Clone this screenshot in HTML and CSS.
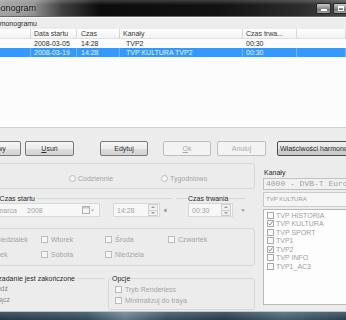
FILE: index.html
```html
<!DOCTYPE html>
<html lang="pl">
<head>
    <meta charset="UTF-8">
    <meta name="viewport" content="width=device-width, initial-scale=1.0">
    <title>Harmonogram</title>
    <link rel="stylesheet" href="styles.css">
</head>
<body>
<div class="window">
    <div class="titlebar">
        <div class="title clip"><span>Harmonogram</span></div>
        <div class="caption-btns">
            <span class="cap-btn"><span class="cap-min"></span></span>
            <span class="cap-btn"><span class="cap-max"></span></span>
        </div>
    </div>

    <div class="client">
        <div class="list-caption clip"><span>Lista harmonogramu</span></div>
        <div class="listview">
            <div class="lv-row lv-head">
                <span class="c0"></span><span class="c1">Data startu</span><span class="c2">Czas</span><span class="c3">Kanały</span><span class="c4">Czas trwa...</span><span class="c5"></span>
            </div>
            <div class="lv-row">
                <span class="c0"></span><span class="c1">2008-03-05</span><span class="c2">14:28</span><span class="c3">TVP2</span><span class="c4">00:30</span><span class="c5"></span>
            </div>
            <div class="lv-row selected">
                <span class="c0"></span><span class="c1">2008-03-19</span><span class="c2">14:28</span><span class="c3">TVP KULTURA TVP2</span><span class="c4">00:30</span><span class="c5"></span>
            </div>
        </div>

        <div class="buttons">
            <button class="btn w-nowy">Nowy</button>
            <button class="btn w-usun"><u>U</u>suń</button>
            <button class="btn w-edytuj">Edytuj</button>
            <button class="btn w-ok" disabled><u>O</u>k</button>
            <button class="btn w-anuluj" disabled>Anuluj</button>
            <button class="btn btn-default w-wlasc">Właściwości harmonogramu</button>
        </div>

        <div class="lower">
            <div class="left">
                <div class="frame mode">
                    <label class="radio-item"><span class="radio"></span>Codziennie</label>
                    <label class="radio-item"><span class="radio"></span>Tygodniowo</label>
                </div>

                <div class="times">
                    <div class="gb-line start">
                        <div class="gb-label clip start-label"><span>Czas startu</span></div>
                        <div class="picker-row">
                            <div class="datepicker">
                                <span class="clip date-day"><span>środa, 19 marca</span></span>
                                <span class="date-year">2008</span>
                                <svg class="cal-icon" width="13" height="8" viewBox="0 0 13 8">
                                    <rect x="0.5" y="0.5" width="7" height="7" fill="#f4f4f4" stroke="#b4b4b4"/>
                                    <rect x="1" y="1" width="6" height="1.5" fill="#c8c8c8"/>
                                    <path d="M9 3.5 L12 3.5 L10.5 5.5 Z" fill="#a8a8a8"/>
                                </svg>
                            </div>
                            <div class="spin spin-time">
                                <span>14:28</span>
                                <span class="spin-btns">
                                    <span class="spin-up"></span>
                                    <span class="spin-down"></span>
                                </span>
                            </div>
                            <svg class="tiny-arrow" width="4" height="5" viewBox="0 0 4 5">
                                <path d="M3.5 0.5 L0.5 2.5 L3.5 4.5 Z" fill="#8c8c8c"/>
                            </svg>
                        </div>
                    </div>

                    <div class="gb-line duration">
                        <div class="gb-label dur-label">Czas trwania</div>
                        <div class="picker-row">
                            <div class="spin spin-dur">
                                <span>00:30</span>
                                <span class="spin-btns">
                                    <span class="spin-up"></span>
                                    <span class="spin-down"></span>
                                </span>
                            </div>
                            <svg class="tiny-dash" width="4" height="3" viewBox="0 0 4 3">
                                <path d="M0 0.5 L4 0.5 L2 2.5 Z" fill="#8c8c8c"/>
                            </svg>
                        </div>
                    </div>
                </div>

                <div class="frame days">
                    <div class="day-grid">
                        <label class="check-item"><span class="check"></span>Poniedziałek</label>
                        <label class="check-item"><span class="check"></span>Wtorek</label>
                        <label class="check-item"><span class="check"></span>Środa</label>
                        <label class="check-item"><span class="check"></span>Czwartek</label>
                        <label class="check-item"><span class="check"></span>Piątek</label>
                        <label class="check-item"><span class="check"></span>Sobota</label>
                        <label class="check-item"><span class="check"></span>Niedziela</label>
                    </div>
                </div>

                <div class="ends">
                    <div class="gb-line when">
                        <div class="gb-label clip when-label"><span>Gdy zadanie jest zakończone</span></div>
                        <div class="when-opt clip w1"><span>Nic nie rób / Uśpij / Budź</span></div>
                        <div class="when-opt clip w2"><span>Wyłącz</span></div>
                    </div>
                    <div class="options">
                        <div class="gb-label opt-label">Opcje</div>
                        <label class="check-item opt"><span class="check"></span>Tryb Renderless</label>
                        <label class="check-item opt"><span class="check"></span>Minimalizuj do traya</label>
                    </div>
                </div>
            </div>

            <div class="right">
                <div class="channels-label">Kanały</div>
                <div class="combo">4000 - DVB-T Europe</div>
                <div class="chan-edit">TVP KULTURA</div>
                <div class="chan-list">
                    <div class="chan"><span class="check"></span>TVP HISTORIA</div>
                    <div class="chan"><span class="check"><svg width="5" height="5" viewBox="0 0 5 5"><path d="M0.5 2.5 L2 4 L4.5 0.5" fill="none" stroke="#8a8a8a" stroke-width="1"/></svg></span>TVP KULTURA</div>
                    <div class="chan"><span class="check"></span>TVP SPORT</div>
                    <div class="chan"><span class="check"></span>TVP1</div>
                    <div class="chan"><span class="check"><svg width="5" height="5" viewBox="0 0 5 5"><path d="M0.5 2.5 L2 4 L4.5 0.5" fill="none" stroke="#8a8a8a" stroke-width="1"/></svg></span>TVP2</div>
                    <div class="chan"><span class="check"></span>TVP INFO</div>
                    <div class="chan"><span class="check"></span>TVP1_AC3</div>
                </div>
            </div>
        </div>
    </div>

    <div class="frame-bottom"></div>
</div>
</body>
</html>
```

FILE: styles.css
```css
* {
    box-sizing: border-box;
}
body {
    margin: 0;
    width: 346px;
    height: 320px;
    overflow: hidden;
    background-color: #ececec;
    font-family: "Liberation Sans", Arial, sans-serif;
    font-size: 7px;
    color: #2b2b2b;
}
.window {
    display: flex;
    flex-direction: column;
    height: 320px;
}
/* text that runs off the left edge: keep its end, cut its start */
.clip {
    display: flex;
    justify-content: flex-end;
    overflow: hidden;
    white-space: nowrap;
}

/* title bar */
.titlebar {
    height: 17px;
    flex: none;
    display: flex;
    justify-content: space-between;
    border-bottom: 1px solid #6a6a6a;
    background:
        linear-gradient(to bottom, rgba(255,255,255,0.2), rgba(255,255,255,0) 5px),
        linear-gradient(to right, #a2a2a2 0, #8e8e8e 34px, #404040 62px, #0c0c0c 100px, #121212 220px, #2c2c2c 300px, #484848 346px);
}
.title {
    width: 36px;
    font-size: 9px;
    line-height: 16px;
    color: #141414;
    text-shadow: 0 0 4px #dcdcdc;
}
.caption-btns {
    display: flex;
    gap: 2px;
    margin-top: 3px;
    margin-right: -2px;
}
.cap-btn {
    width: 15px;
    height: 11px;
    border: 1px solid #262626;
    border-radius: 2px;
    background: linear-gradient(#cacaca, #8d8d8d 50%, #6a6a6a 51%, #a2a2a2);
    display: flex;
    align-items: center;
    justify-content: center;
}
.cap-min {
    width: 6px;
    height: 2px;
    margin-top: 3px;
    background: #fff;
}
.cap-max {
    width: 6px;
    height: 5px;
    border: 1px solid #fff;
    border-top-width: 2px;
}

/* client */
.client {
    flex: 1;
    display: flex;
    flex-direction: column;
    border-top: 1px solid #fbfbfb;
}
.list-caption {
    width: 37px;
    height: 10px;
    line-height: 10px;
    margin-top: 1px;
    flex: none;
}

/* list view */
.listview {
    height: 99px;
    flex: none;
    background-color: #fcfcfc;
    border-bottom: 1px solid #d2d2d2;
}
.lv-row {
    display: flex;
    height: 9px;
    line-height: 9px;
    white-space: nowrap;
}
.lv-row span {
    flex: none;
    padding-left: 3px;
    overflow: hidden;
}
.c0 { width: 31px; }
.c1 { width: 46px; }
.c2 { width: 43px; }
.c3 { width: 123px; }
.c4 { width: 54px; }
.lv-row .c5 { flex: 1; }
.lv-row .c2 { padding-left: 4px; }
.lv-row .c3 { padding-left: 6px; }
.lv-head {
    height: 10px;
    line-height: 10px;
    background: linear-gradient(#ffffff, #f3f3f3);
    border-bottom: 1px solid #e0e0e0;
    color: #3a3a3a;
}
.lv-head span {
    border-right: 1px solid #d6d6d6;
}
.lv-head .c3 {
    padding-left: 3px;
}
.selected {
    background-color: #3399ff;
    color: #eaf3ff;
}
.selected span {
    border-right: 1px solid rgba(255,255,255,0.3);
}

/* buttons */
.buttons {
    display: flex;
    height: 15px;
    margin-top: 13px;
    flex: none;
}
.btn {
    font: inherit;
    height: 15px;
    padding: 0;
    flex: none;
    white-space: nowrap;
    border: 1px solid #7a7a7a;
    border-radius: 2px;
    color: #2b2b2b;
    background: linear-gradient(#f5f5f5, #ececec 50%, #dedede 51%, #d3d3d3);
}
.btn:disabled {
    border-color: #bcc0c3;
    background: #f3f3f3;
    color: #a9a9a9;
}
.btn-default {
    border-color: #4d4d4d;
    text-align: left;
    padding-left: 2px;
    overflow: hidden;
    background: linear-gradient(#f0f0f0, #e4e4e4 50%, #d2d2d2 51%, #c9c9c9);
}
.w-nowy { width: 48px; margin-left: -27px; }
.w-usun { width: 49px; margin-left: 4px; }
.w-edytuj { width: 48px; margin-left: 26px; }
.w-ok { width: 48px; margin-left: 15px; }
.w-anuluj { width: 49px; margin-left: 6px; }
.w-wlasc { width: 80px; margin-left: 11px; }

/* lower part */
.lower {
    display: flex;
    height: 155px;
    flex: none;
}
.left {
    width: 255px;
    flex: none;
    display: flex;
    flex-direction: column;
}
.right {
    width: 90px;
    margin-left: 8px;
    flex: none;
    display: flex;
    flex-direction: column;
}
.frame {
    border: 1px solid #d3d8dc;
    border-radius: 3px;
    margin-left: -10px;
    width: 265px;
    flex: none;
}

.mode {
    height: 26px;
    margin-top: 7px;
    padding: 4px 0 0 78px;
    display: flex;
    align-items: center;
}
.radio-item {
    display: flex;
    align-items: center;
    width: 92px;
    flex: none;
    color: #a5a5a5;
}
.radio {
    width: 7px;
    height: 7px;
    margin-right: 2px;
    flex: none;
    border: 1px solid #bdbdbd;
    border-radius: 50%;
    background: #f6f6f6;
}

/* group boxes drawn as a top line with a label over it */
.gb-line {
    border-top: 1px solid #d3d8dc;
}
.gb-label {
    height: 9px;
    line-height: 9px;
    margin-top: -5px;
    background-color: #ececec;
    white-space: nowrap;
}

.times {
    display: flex;
    height: 31px;
    flex: none;
}
.start {
    width: 172px;
    margin-top: 9px;
}
.start-label {
    width: 37px;
    padding-right: 2px;
}
.picker-row {
    display: flex;
    align-items: center;
    height: 14px;
}
.datepicker {
    width: 100px;
    height: 14px;
    display: flex;
    align-items: center;
    border: 1px solid #d8d8d8;
    border-left: none;
    background: #f7f7f7;
    color: #a5a5a5;
}
.date-day {
    width: 17px;
}
.date-year {
    margin-left: 10px;
}
.cal-icon {
    margin-left: auto;
    margin-right: 4px;
}
.spin {
    display: flex;
    align-items: center;
    height: 14px;
    padding-left: 3px;
    border: 1px solid #d8d8d8;
    background: #f7f7f7;
    color: #a5a5a5;
}
.spin-time {
    width: 47px;
    margin-left: 13px;
}
.spin-dur {
    width: 45px;
    margin-left: 12px;
}
.spin-btns {
    margin-left: auto;
    margin-right: 1px;
    width: 10px;
    height: 12px;
    display: flex;
    flex-direction: column;
    border: 1px solid #d0d0d0;
    background: #efefef;
}
.spin-up, .spin-down {
    flex: 1;
    position: relative;
}
.spin-up {
    border-bottom: 1px solid #d0d0d0;
}
.spin-up::after, .spin-down::after {
    content: "";
    position: absolute;
    left: 2px;
    top: 1px;
    border-left: 2px solid transparent;
    border-right: 2px solid transparent;
}
.spin-up::after {
    border-bottom: 2px solid #9a9a9a;
}
.spin-down::after {
    border-top: 2px solid #9a9a9a;
}
.tiny-arrow {
    margin-left: 3px;
}
.tiny-dash {
    margin-left: 8px;
}
.duration {
    width: 69px;
    margin-left: 4px;
    margin-top: 9px;
}
.dur-label {
    margin-left: 11px;
    padding: 0 1px;
    width: max-content;
}

.days {
    height: 38px;
    margin-top: 8px;
    padding-top: 7px;
}
.day-grid {
    display: grid;
    grid-template-columns: 63px 64px 63px auto;
    grid-auto-rows: 7px;
    row-gap: 8px;
    margin-left: -13px;
}
.check-item {
    display: flex;
    align-items: center;
    white-space: nowrap;
    color: #a5a5a5;
}
.check {
    width: 7px;
    height: 7px;
    margin-right: 3px;
    flex: none;
    border: 1px solid #bcbcbc;
    background: #f6f6f6;
    display: flex;
    align-items: center;
    justify-content: center;
}

.ends {
    display: flex;
    height: 45px;
    flex: none;
}
.when {
    width: 105px;
    margin-top: 12px;
}
.when-label {
    width: 77px;
    padding-right: 2px;
}
.when-opt {
    height: 11px;
    line-height: 11px;
    color: #8a8a8a;
}
.w1 { width: 8px; }
.w2 { width: 10px; }
.options {
    width: 147px;
    height: 32px;
    margin-left: 3px;
    margin-top: 12px;
    border: 1px solid #d3d8dc;
    border-radius: 3px;
}
.opt-label {
    margin-left: 2px;
    padding: 0 1px;
    width: max-content;
}
.opt {
    height: 7px;
    margin-top: 3px;
    padding-left: 6px;
}
.opt + .opt {
    margin-top: 4px;
}

/* channels */
.channels-label {
    height: 9px;
    line-height: 9px;
    margin-top: 12px;
    padding-left: 1px;
}
.combo {
    height: 12px;
    margin-top: 1px;
    padding-left: 2px;
    line-height: 10px;
    white-space: nowrap;
    overflow: hidden;
    border: 1px solid #c2c2c2;
    background: #f1f1f1;
    color: #a2a2a2;
    font-family: "Liberation Mono", "Courier New", monospace;
    font-size: 8px;
}
.chan-edit {
    height: 15px;
    margin-top: 2px;
    padding-left: 2px;
    line-height: 13px;
    font-size: 6px;
    border: 1px solid #cbcbcb;
    background: #f5f5f5;
    color: #9c9c9c;
}
.chan-list {
    height: 96px;
    margin-top: 2px;
    padding: 1px 0 0 3px;
    border: 1px solid #b9b9b9;
    background: #fdfdfd;
}
.chan {
    display: flex;
    align-items: center;
    height: 8.5px;
    white-space: nowrap;
    color: #a0a0a0;
}
.chan .check {
    margin-right: 2px;
    border-color: #a8a8a8;
    background: #fafafa;
}

/* window frame */
.frame-bottom {
    height: 9px;
    flex: none;
    border-top: 1px solid #b9c6ce;
    background:
        linear-gradient(to bottom, rgba(255,255,255,0.15), rgba(0,0,0,0.1)),
        linear-gradient(to right, #2a3d4b 0, #35505f 25%, #6a8494 36%, #3b5565 48%, #2a3f4e 65%, #4b6676 82%, #2e4554 100%);
}
```
